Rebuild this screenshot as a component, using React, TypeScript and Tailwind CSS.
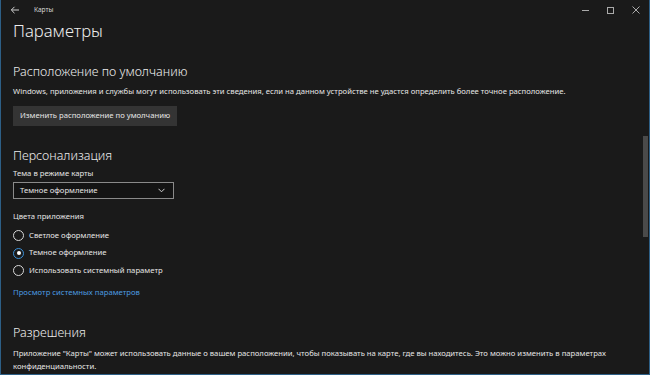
import React from 'react'

const font = { fontFamily: '"Noto Sans", "Open Sans", sans-serif' }

const Radio = ({ checked, label }: { checked?: boolean; label: string }) => (
  <div className="flex items-center gap-[5px] h-[17.5px]">
    {checked ? (
      <span className="w-[11px] h-[11px] rounded-full border-[1.5px] border-[#3b8fd6] flex items-center justify-center">
        <span className="w-[4px] h-[4px] rounded-full bg-white" />
      </span>
    ) : (
      <span className="w-[11px] h-[11px] rounded-full border-[1.5px] border-[#d8d8d8]" />
    )}
    <span className="text-[7.7px] text-[#e6e6e6]">{label}</span>
  </div>
)

export default function App() {
  return (
    <div style={font} className="w-[650px] h-[375px] bg-[#1a1a1a] border-x border-b border-[#2d5f86] flex overflow-hidden text-white">
      <div className="flex-1 flex flex-col min-h-0">
        {/* title bar */}
        <div className="h-[20px] shrink-0 flex items-center pl-[9px]">
          <svg width="10" height="10" viewBox="0 0 10 10" className="text-[#d0d0d0]">
            <path d="M9 5H1.5M4.5 1.8L1.3 5l3.2 3.2" fill="none" stroke="currentColor" strokeWidth="1" />
          </svg>
          <span className="ml-[14px] text-[6.5px] text-[#d8d8d8]">Карты</span>
          <div className="ml-auto flex items-center pr-[1px]">
            <span className="w-[25px] flex justify-center"><span className="w-[7px] h-px bg-[#aaa]" /></span>
            <span className="w-[25px] flex justify-center"><span className="w-[7px] h-[7px] border border-[#aaa]" /></span>
            <span className="w-[25px] flex justify-center">
              <svg width="8" height="8" viewBox="0 0 8 8"><path d="M0.5 0.5l7 7M7.5 0.5l-7 7" stroke="#aaa" strokeWidth="1" /></svg>
            </span>
          </div>
        </div>

        <div className="flex-1 flex min-h-0">
          <div className="flex-1 pl-[12px] flex flex-col">
            <h1 className="text-[16.7px] font-light leading-[22px] text-[#ececec]">Параметры</h1>

            <h2 className="text-[12.5px] font-light leading-[18px] mt-[21px] text-[#ececec]">Расположение по умолчанию</h2>
            <p className="text-[7.7px] leading-[12px] mt-[4px] text-[#e6e6e6]">
              Windows, приложения и службы могут использовать эти сведения, если на данном устройстве не удастся определить более точное расположение.
            </p>
            <div className="mt-[3px]">
              <span className="inline-flex items-center h-[20px] px-[7px] bg-[#343434] text-[7.7px] text-[#e6e6e6]">Изменить расположение по умолчанию</span>
            </div>

            <h2 className="text-[12.5px] font-light leading-[18px] mt-[21px] text-[#ececec]">Персонализация</h2>
            <p className="text-[7.7px] leading-[12px] mt-[2px] text-[#e6e6e6]">Тема в режиме карты</p>
            <div className="mt-[3px] w-[161px] h-[17px] border border-[#8a8a8a] bg-[#141414] flex items-center px-[6px]">
              <span className="text-[7.7px] text-[#e6e6e6]">Темное оформление</span>
              <svg width="7" height="5" viewBox="0 0 7 5" className="ml-auto mr-[2px]">
                <path d="M0.5 0.8L3.5 3.8l3-3" fill="none" stroke="#d0d0d0" strokeWidth="1" />
              </svg>
            </div>

            <p className="text-[7.7px] leading-[12px] mt-[11px] text-[#e6e6e6]">Цвета приложения</p>
            <div className="mt-[5px] flex flex-col">
              <Radio label="Светлое оформление" />
              <Radio checked label="Темное оформление" />
              <Radio label="Использовать системный параметр" />
            </div>
            <a className="text-[7.7px] leading-[12px] mt-[6.5px] text-[#4c9be0]">Просмотр системных параметров</a>

            <h2 className="text-[12.5px] font-light leading-[18px] mt-[26.5px] text-[#ececec]">Разрешения</h2>
            <p className="text-[7.7px] leading-[13px] mt-[4.5px] text-[#e6e6e6] pr-[16px]">
              Приложение "Карты" может использовать данные о вашем расположении, чтобы показывать на карте, где вы находитесь. Это можно изменить в параметрах конфиденциальности.
            </p>
          </div>
          {/* scrollbar */}
          <div className="w-[5px] mr-[1px] flex flex-col">
            <div className="h-[116px]" />
            <div className="h-[101px] bg-[#4a4a4a]" />
          </div>
        </div>
      </div>
    </div>
  )
}
